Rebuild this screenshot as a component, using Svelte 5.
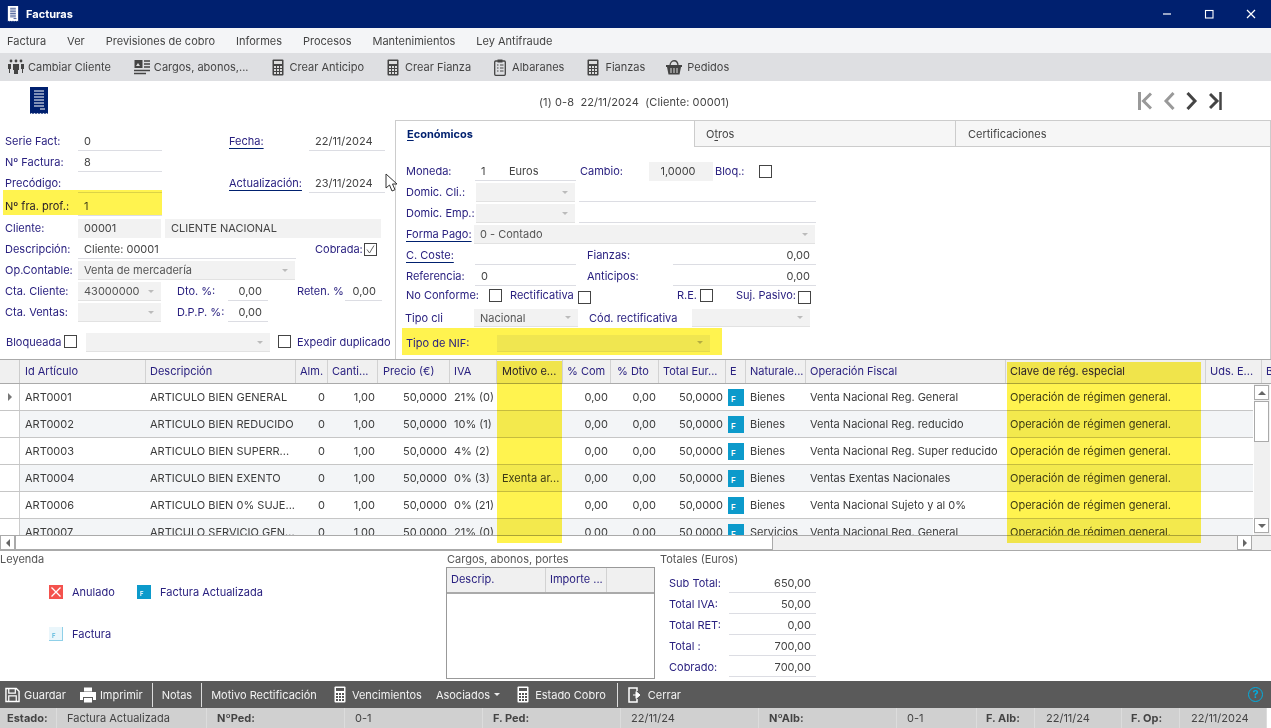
<script>
  const menu = ['Factura', 'Ver', 'Previsiones de cobro', 'Informes', 'Procesos', 'Mantenimientos', 'Ley Antifraude'];
  const cols = [
    ['Id Artículo', 'c1'], ['Descripción', 'c2'], ['Alm.', 'c3'], ['Canti...', 'c4'], ['Precio (€)', 'c5'], ['IVA', 'c6'],
    ['Motivo e...', 'c7'], ['% Com', 'c8'], ['% Dto', 'c9'], ['Total Eur...', 'c10'], ['E', 'c11'], ['Naturale...', 'c12'],
    ['Operación Fiscal', 'c13'], ['Clave de rég. especial', 'c14'], ['Uds. E...', 'c15'], ['B', 'c16']
  ];
  const rows = [
    ['ART0001', 'ARTICULO BIEN GENERAL', '21% (0)', '', 'Bienes', 'Venta Nacional Reg. General'],
    ['ART0002', 'ARTICULO BIEN REDUCIDO', '10% (1)', '', 'Bienes', 'Venta Nacional Reg. reducido'],
    ['ART0003', 'ARTICULO BIEN SUPERR...', '4% (2)', '', 'Bienes', 'Venta Nacional Reg. Super reducido'],
    ['ART0004', 'ARTICULO BIEN EXENTO', '0% (3)', 'Exenta ar...', 'Bienes', 'Ventas Exentas Nacionales'],
    ['ART0006', 'ARTICULO BIEN 0% SUJE...', '0% (21)', '', 'Bienes', 'Venta Nacional Sujeto y al 0%'],
    ['ART0007', 'ARTICULO SERVICIO GEN...', '21% (0)', '', 'Servicios', 'Venta Nacional Reg. General']
  ];
  const totals = [['Sub Total:', '650,00'], ['Total IVA:', '50,00'], ['Total RET:', '0,00'], ['Total :', '700,00'], ['Cobrado:', '700,00']];
  const status = [
    ['Estado:', 's1', true], ['Factura Actualizada', 's2', false], ['NºPed:', 's3', true], ['0-1', 's3', false],
    ['F. Ped:', 's3', true], ['22/11/24', 's3', false], ['NºAlb:', 's3', true], ['0-1', 's4', false],
    ['F. Alb:', 's5', true], ['22/11/24', 's6', false], ['F. Op:', 's5', true], ['22/11/2024', 's6', false]
  ];
</script>

{#snippet calc()}
  <svg class="ic12" viewBox="0 0 12 17"><rect x="0.5" y="0.5" width="11" height="16" rx="1" fill="#444"/><rect x="2" y="2" width="8" height="3" fill="#ddd"/><path d="M2 7h2v2H2zM5 7h2v2H5zM8 7h2v2H8zM2 10h2v2H2zM5 10h2v2H5zM8 10h2v2H8zM2 13h2v2H2zM5 13h2v2H5zM8 13h2v2H8z" fill="#ddd"/></svg>
{/snippet}
{#snippet calcW()}
  <svg class="ic12" viewBox="0 0 12 17"><rect x="0.5" y="0.5" width="11" height="16" rx="1" fill="#fff"/><rect x="2" y="2" width="8" height="3" fill="#555"/><path d="M2 7h2v2H2zM5 7h2v2H5zM8 7h2v2H8zM2 10h2v2H2zM5 10h2v2H5zM8 10h2v2H8zM2 13h2v2H2zM5 13h2v2H5zM8 13h2v2H8z" fill="#555"/></svg>
{/snippet}
{#snippet receipt(bg, fg, cls)}
  <svg class={cls} viewBox="0 0 18 28"><path d="M0 0h18v27l-1.5-1-1.5 1-1.5-1-1.5 1-1.5-1-1.5 1-1.5-1-1.5 1-1.5-1-1.5 1-1.5-1L0 27z" fill={bg}/><path d="M4 4h10M4 7h10M4 10h10M4 13h10M4 16h10M4 19h10M10 22h5" stroke={fg} stroke-width="1.2"/></svg>
{/snippet}
{#snippet sel(text, cls)}
  <div class="sel {cls}"><span>{text}</span><i class="caret"></i></div>
{/snippet}

<div class="app">
  <header class="title">
    {@render receipt('#fff', '#00206f', 'tico')}
    <b>Facturas</b>
    <div class="win">
      <svg viewBox="0 0 10 10"><path d="M1 5h8" stroke="#fff" stroke-width="1.2"/></svg>
      <svg viewBox="0 0 10 10"><rect x="1.5" y="1.5" width="7.5" height="7.5" fill="none" stroke="#fff" stroke-width="1.1"/></svg>
      <svg viewBox="0 0 10 10"><path d="M1 1l8 8M9 1l-8 8" stroke="#fff" stroke-width="1.2"/></svg>
    </div>
  </header>

  <nav class="menu">
    {#each menu as m}<span>{m}</span>{/each}
  </nav>

  <div class="tools">
    <div class="tool t0"><svg class="ic16" viewBox="0 0 16 16" fill="#444"><circle cx="3" cy="2" r="1.4"/><circle cx="8" cy="2" r="1.4"/><circle cx="13" cy="2" r="1.4"/><path d="M0 5h3v5H2v4H1v-4H0zM13 5h3v5h-1v4h-1v-4h-1zM5 5h6v6h-1v4H6v-4H5z"/></svg><span>Cambiar Cliente</span></div>
    <div class="tool"><svg class="ic16" viewBox="0 0 16 16"><rect x="0.5" y="1" width="8" height="8" fill="#444"/><path d="M2 7l2-3 2 3z" fill="#ddd"/><path d="M10 2h6M10 5h6M10 8h6M0 11.5h16M0 14.5h12" stroke="#444" stroke-width="1.5"/></svg><span>Cargos, abonos,...</span></div>
    <div class="tool t2">{@render calc()}<span>Crear Anticipo</span></div>
    <div class="tool t2">{@render calc()}<span>Crear Fianza</span></div>
    <div class="tool t2"><svg class="ic12" viewBox="0 0 12 17"><rect x="0.7" y="2" width="10.6" height="14.3" rx="1" fill="none" stroke="#444" stroke-width="1.3"/><rect x="3.5" y="0.5" width="5" height="3" fill="#444"/><path d="M3 6h1.5M6 6h3.5M3 9h1.5M6 9h3.5M3 12h1.5M6 12h3.5" stroke="#444"/></svg><span>Albaranes</span></div>
    <div class="tool t2">{@render calc()}<span>Fianzas</span></div>
    <div class="tool t3"><svg class="ic16" viewBox="0 0 16 16"><path d="M4 7c0-7 8-7 8 0" fill="none" stroke="#444" stroke-width="1.3"/><path d="M0 6h16v2h-1l-1.5 7.5h-11L1 8H0z" fill="#444"/><path d="M5 9v5M8 9v5M11 9v5" stroke="#ddd"/></svg><span>Pedidos</span></div>
  </div>

  <section class="top">
    <div class="hdr">
      <div class="hleft">{@render receipt('#00206f', '#fff', 'big')}</div>
      <div class="hmid">(1) 0-8&nbsp; 22/11/2024&nbsp; (Cliente: 00001)</div>
      <div class="navs">
        <svg class="n1" viewBox="0 0 14 18"><path d="M1.5 0v18" stroke="#999" stroke-width="3"/><path d="M13 1.500L5.500 9l7.500 7.500" fill="none" stroke="#999" stroke-width="3"/></svg>
        <svg class="n2" viewBox="0 0 12 18"><path d="M10.500 1L3 9l7.500 8" fill="none" stroke="#999" stroke-width="3"/></svg>
        <svg class="n2" viewBox="0 0 12 18"><path d="M1.500 1L9 9l-7.500 8" fill="none" stroke="#444" stroke-width="3"/></svg>
        <svg class="n1" viewBox="0 0 13 18"><path d="M1 2l7 7-7 7" fill="none" stroke="#444" stroke-width="3"/><path d="M11.500 0v18" stroke="#444" stroke-width="2.500"/></svg>
      </div>
    </div>
    <div class="panels">
      <div class="left">
        <div class="lr r1"><label>Serie Fact:</label><div class="f">0</div><label class="col"><u>Fecha:</u></label><div class="f">22/11/2024</div></div>
        <div class="lr r1"><label>Nº Factura:</label><div class="f">8</div></div>
        <div class="lr r1"><label>Precódigo:</label><div class="f"></div><label class="col"><u>Actualización:</u></label><div class="f">23/11/2024</div></div>
        <div class="lr r1 prof"><i class="band"></i><label>Nº fra. prof.:</label><div class="f">1</div></div>
        <div class="lr r5"><label>Cliente:</label><div class="f g">00001</div><div class="f g wide">CLIENTE NACIONAL</div></div>
        <div class="lr r6"><label>Descripción:</label><div class="f">Cliente: 00001</div><label class="cob">Cobrada:</label><svg class="cb" viewBox="0 0 13 13"><rect x="0.500" y="0.500" width="12" height="12" fill="#fff" stroke="#444"/><path d="M3 6.500l2.500 3.500L10 2.500" fill="none" stroke="#666"/></svg></div>
        <div class="lr r7"><label>Op.Contable:</label>{@render sel('Venta de mercadería', '')}</div>
        <div class="lr r8"><label>Cta. Cliente:</label>{@render sel('43000000', '')}<label class="d">Dto. %:</label><div class="f num">0,00</div><label class="rt">Reten. %</label><div class="f num last">0,00</div></div>
        <div class="lr r8"><label>Cta. Ventas:</label>{@render sel('', '')}<label class="d">D.P.P. %:</label><div class="f num">0,00</div></div>
        <div class="lr r10"><label>Bloqueada</label><i class="box"></i>{@render sel('', '')}<i class="box"></i><label>Expedir duplicado</label></div>
      </div>

      <div class="tabs">
        <div class="tabhead">
          <div class="tab on"><u>E</u>conómicos</div>
          <div class="tab o">O<u>t</u>ros</div>
          <div class="tab c">Certificaciones</div>
        </div>
        <div class="tabbody">
          <div class="tr a"><label>Moneda:</label><div class="f mon"><span>1</span><span>Euros</span></div><label class="cam">Cambio:</label><div class="f g">1,0000</div><label class="blq">Bloq.:</label><i class="box"></i></div>
          <div class="tr b"><label>Domic. Cli.:</label>{@render sel('', '')}<div class="f"></div></div>
          <div class="tr b"><label>Domic. Emp.:</label>{@render sel('', '')}<div class="f"></div></div>
          <div class="tr c2r"><label><u>Forma Pago:</u></label>{@render sel('0 - Contado', '')}</div>
          <div class="tr d2"><label><u>C. Coste:</u></label><div class="f"></div><label class="fz">Fianzas:</label><div class="f num2">0,00</div></div>
          <div class="tr d2"><label>Referencia:</label><div class="f">0</div><label class="fz">Anticipos:</label><div class="f num2">0,00</div></div>
          <div class="tr nc"><label>No Conforme:</label><i class="box"></i><label class="rc">Rectificativa</label><i class="box low"></i><label class="re">R.E.</label><i class="box"></i><label class="sj">Suj. Pasivo:</label><i class="box low"></i></div>
          <div class="tr tc"><label>Tipo cli</label>{@render sel('Nacional', '')}<label class="cr">Cód. rectificativa</label>{@render sel('', '')}</div>
          <div class="nif"><label>Tipo de NIF:</label>{@render sel('', 'ysel')}</div>
        </div>
      </div>
    </div>
    <svg class="cursor" viewBox="0 0 14 19"><path d="M1 1v14l3.500-3 2.500 6 3-1.300-2.500-5.700H12z" fill="#fff" stroke="#333"/></svg>
  </section>

  <section class="table">
    <div class="thead">
      <div class="rh"></div>
      {#each cols as c}<div class="th {c[1]}">{c[0]}</div>{/each}
    </div>
    <div class="tmid">
      <div class="tbody">
        {#each rows as r, i}
          <div class="row" class:alt={i % 2 === 1}>
            <div class="rh">{#if i === 0}<i class="tri"></i>{/if}</div>
            <div class="td c1">{r[0]}</div>
            <div class="td c2">{r[1]}</div>
            <div class="td c3 n">0</div>
            <div class="td c4 n">1,00</div>
            <div class="td c5 n">50,0000</div>
            <div class="td c6">{r[2]}</div>
            <div class="td c7">{r[3]}</div>
            <div class="td c8 n">0,00</div>
            <div class="td c9 n">0,00</div>
            <div class="td c10 n">50,0000</div>
            <div class="td c11 ec"><span class="fic">F</span></div>
            <div class="td c12">{r[4]}</div>
            <div class="td c13">{r[5]}</div>
            <div class="td c14">Operación de régimen general.</div>
            <div class="td c15"></div>
          </div>
        {/each}
      </div>
      <div class="vbar">
        <div class="sb"><i class="up"></i></div>
        <div class="thumb"></div>
        <div class="sp"></div>
        <div class="sb"><i class="down"></i></div>
      </div>
    </div>
    <div class="hbar">
      <div class="sb h"><i class="lf"></i></div>
      <div class="hthumb"></div>
      <div class="sp"></div>
      <div class="sb h"><i class="rg"></i></div>
    </div>
    <i class="hl hl1"></i>
    <i class="hl hl2"></i>
  </section>

  <section class="bottom">
    <div class="legend">
      <div class="cap">Leyenda</div>
      <div class="lgrid">
        <div class="li"><svg class="lic" viewBox="0 0 14 14"><rect width="14" height="14" fill="#f4524d"/><path d="M2.500 2.500l9 9M11.500 2.500l-9 9" stroke="#fff" stroke-width="1.300"/></svg><span>Anulado</span></div>
        <div class="li l2"><span class="fic lg">F</span><span>Factura Actualizada</span></div>
        <div class="li"><span class="fic lg pale">F</span><span>Factura</span></div>
      </div>
    </div>
    <div class="cargos">
      <div class="cap">Cargos, abonos, portes</div>
      <div class="cbox">
        <div class="chead"><div>Descrip.</div><div>Importe ...</div><div></div></div>
      </div>
    </div>
    <div class="totals">
      <div class="cap">Totales (Euros)</div>
      <div class="tlist">
        {#each totals as t}
          <div class="trow"><label>{t[0]}</label><div class="f num">{t[1]}</div></div>
        {/each}
      </div>
    </div>
  </section>

  <div class="actions">
    <div class="act"><svg class="ic15" viewBox="0 0 16 16"><path d="M1 1h11l3 3v11H1z" fill="none" stroke="#fff" stroke-width="1.500"/><path d="M4 1v5h7V1M4 15v-6h8v6" fill="none" stroke="#fff" stroke-width="1.300"/></svg><span>Guardar</span></div>
    <div class="act"><svg class="ic16" viewBox="0 0 16 16"><rect x="4" y="0.500" width="8" height="4" fill="#fff"/><path d="M0 5h16v8h-3v-3H3v3H0z" fill="#fff"/><rect x="4" y="11" width="8" height="4.500" fill="#fff"/></svg><span>Imprimir</span></div>
    <i class="sepv"></i>
    <div class="act"><span>Notas</span></div>
    <i class="sepv"></i>
    <div class="act"><span>Motivo Rectificación</span></div>
    <div class="act a6">{@render calcW()}<span>Vencimientos</span></div>
    <div class="act"><span>Asociados</span><i class="wcar"></i></div>
    <div class="act a6">{@render calcW()}<span>Estado Cobro</span></div>
    <i class="sepv s-last"></i>
    <div class="act cer"><svg class="ic16" viewBox="0 0 16 16"><path d="M9 4V1H1v14h8v-3" fill="none" stroke="#fff" stroke-width="1.500"/><path d="M5 8h6M8 4.500L12 8l-4 3.500z" fill="#fff" stroke="#fff"/></svg><span>Cerrar</span></div>
    <div class="help">?</div>
  </div>

  <footer class="status">
    {#each status as s}<div class={s[1]} class:k={s[2]}>{s[0]}</div>{/each}
  </footer>
</div>

<style>
  :global(body) { margin: 0; background: #fff; }
  .app { width: 1271px; height: 728px; overflow: hidden; display: flex; flex-direction: column; font: 11px Inter, "Liberation Sans", sans-serif; color: #444; background: #fff; }
  label { color: #2a2180; white-space: nowrap; }
  label u { text-decoration-color: #00206f; text-underline-offset: 3px; }
  i { display: block; }

  .title { height: 28px; flex: none; background: #00206f; display: flex; align-items: center; color: #fff; padding-left: 7px; }
  .title b { margin-left: 7px; font-size: 11px; }
  .tico { width: 12px; height: 16px; }
  .win { margin-left: auto; display: flex; gap: 32px; padding-right: 15px; }
  .win svg { width: 10px; height: 10px; }

  .menu { height: 25px; flex: none; background: #f4f5f7; display: flex; align-items: center; gap: 21px; padding-left: 7px; }
  .tools { height: 28px; flex: none; background: #dedfe2; display: flex; align-items: center; padding-left: 8px; gap: 21px; }
  .tool { display: flex; align-items: center; gap: 4px; }
  .t0 { margin-right: 2px; }
  .t2 { gap: 6px; margin-left: 2px; }
  .t3 { gap: 5px; }
  .ic16 { width: 16px; height: 16px; flex: none; }
  .ic15 { width: 15px; height: 16px; flex: none; }
  .ic12 { width: 12px; height: 17px; flex: none; }

  .top { height: 278px; flex: none; position: relative; }
  .hdr { height: 39px; display: flex; }
  .hleft { width: 539px; padding: 6px 0 0 30px; box-sizing: border-box; }
  .big { width: 18px; height: 28px; display: block; }
  .hmid { padding-top: 14px; letter-spacing: 0.09px; }
  .navs { margin-left: auto; padding: 11px 49px 0 0; display: flex; gap: 11px; }
  .navs svg { height: 18px; }
  .n1 { width: 14px; }
  .n2 { width: 12px; }
  .navs .n1:last-child { width: 13px; }
  .panels { display: flex; }
  .cursor { position: absolute; left: 385px; top: 92px; width: 14px; height: 19px; }

  .left { width: 395px; flex: none; padding: 11px 0 0 5px; box-sizing: border-box; }
  .lr { height: 20px; margin-bottom: 1px; display: grid; align-items: end; position: relative; }
  .lr > label { align-self: center; }
  .f { height: 19px; line-height: 18px; box-sizing: border-box; border-bottom: 1px solid #dcdde3; padding-left: 6px; overflow: hidden; white-space: nowrap; }
  .g { background: #f2f2f2; border-bottom-color: #f2f2f2; }
  .num, .num2 { text-align: right; padding: 0 6px 0 0; }
  .r1 { grid-template-columns: 73px 84px 67px 80px 76px; }
  .col { grid-column: 3 / span 2; padding-left: 67px; }
  .prof { margin-top: 3px; margin-bottom: 2px; }
  .band { position: absolute; left: -2px; top: -6px; width: 159px; height: 25px; background: #fff34f; mix-blend-mode: multiply; }
  .r5 { grid-template-columns: 73px 83px 4px 216px; }
  .r5 .wide { grid-column: 4; }
  .r6 { grid-template-columns: 73px 218px 19px 49px 13px; }
  .cob { grid-column: 4; }
  .cb { width: 13px; height: 13px; grid-column: 5; align-self: center; }
  .r7 { grid-template-columns: 73px 217px; }
  .r8 { grid-template-columns: 73px 83px 16px 51px 40px 29px 48px 37px; }
  .d { grid-column: 4; }
  .rt { grid-column: 6 / span 2; padding-left: 29px; }
  .last { grid-column: 8; }
  .r10 { margin-top: 9px; margin-left: 1px; grid-template-columns: 58px 13px 9px 184px 8px 13px 6px auto; align-items: center; }
  .r10 > :nth-child(2) { grid-column: 2; }
  .r10 > :nth-child(3) { grid-column: 4; }
  .r10 > :nth-child(4) { grid-column: 6; }
  .r10 > :nth-child(5) { grid-column: 8; }
  .r10 .sel { margin-top: 2px; }

  .box { width: 13px; height: 13px; border: 1px solid #444; box-sizing: border-box; background: #fff; flex: none; }
  .low { transform: translateY(2px); }
  .sel { height: 19px; box-sizing: border-box; background: #f2f2f2; border-bottom: 1px solid #e2e2e2; display: flex; align-items: center; justify-content: space-between; padding: 0 7px 0 6px; color: #555; }
  .caret { width: 0; height: 0; border: 3px solid transparent; border-top: 3px solid #bbb; margin-top: 3px; }

  .tabs { flex: 1; min-width: 0; }
  .tabhead { display: flex; height: 27px; }
  .tab { box-sizing: border-box; line-height: 26px; padding-left: 12px; background: #f6f6f6; border-top: 1px solid #ccc; border-bottom: 1px solid #ccc; border-right: 1px solid #ccc; }
  .tab u { text-underline-offset: 2px; }
  .tab.on { width: 300px; background: #fff; font-weight: 700; color: #00206f; border-bottom: 0; border-left: 1px solid #ccc; padding-left: 11px; }
  .tab.o { width: 261px; padding-left: 11px; }
  .tab.c { width: 315px; }
  .tabbody { height: 212px; box-sizing: border-box; border-left: 1px solid #ccc; border-right: 1px solid #ccc; padding: 15px 0 0 10px; }
  .tr { height: 19px; margin-bottom: 2px; display: flex; align-items: center; }
  .tr label { flex: none; align-self: flex-start; line-height: 18px; }
  .tr .f { flex: none; }
  .tr .sel { flex: none; }
  .a label:first-child { width: 69px; }
  .mon { width: 101px; display: flex; }
  .mon span:first-child { width: 28px; }
  .cam { width: 69px; margin-left: 4px; }
  .a .g { width: 64px; text-align: center; padding: 0 6px 0 0; }
  .blq { width: 44px; margin-left: 2px; }
  .b label { width: 70px; }
  .b .sel { width: 99px; }
  .b .f { width: 237px; margin-left: 4px; }
  .c2r label { width: 68px; }
  .c2r .sel { width: 341px; }
  .d2 label:first-child { width: 69px; }
  .d2 .f:nth-child(2) { width: 101px; }
  .fz { width: 86px; margin-left: 11px; }
  .num2 { width: 143px; }
  .nc { margin-top: -2px; margin-bottom: 4px; }
  .nc label:first-child { width: 83px; }
  .rc { width: 68px; margin-left: 8px; }
  .re { width: 23px; margin-left: 86px; }
  .sj { width: 62px; margin-left: 23px; }
  .tc { margin: 1px 0 2px -1px; height: 18px; }
  .tc label:first-child { width: 69px; }
  .tc .sel { height: 18px; }
  .tc .sel:nth-child(2) { width: 104px; }
  .cr { width: 103px; margin-left: 11px; }
  .tc .sel:last-child { width: 118px; }
  .nif { width: 320px; height: 27px; margin-left: -4px; margin-top: -1px; background: #fff34f; display: flex; align-items: center; box-sizing: border-box; padding: 3px 0 0 4px; }
  .nif label { width: 91px; }
  .ysel { width: 213px; height: 17px; background: #f0e650; border-bottom-color: #e4da4c; padding-right: 7px; }
  .ysel .caret { border-top-color: #b5ad40; }

  .table { height: 192px; flex: none; position: relative; box-sizing: border-box; border-top: 1px solid #aaa; border-bottom: 1px solid #aaa; display: flex; flex-direction: column; }
  .thead { height: 23px; flex: none; display: flex; background: #f0f0f0; border-bottom: 1px solid #aaa; box-sizing: content-box; overflow: hidden; }
  .th { box-sizing: border-box; line-height: 23px; padding-left: 4px; color: #2a2180; border-right: 1px solid #d2d2d2; flex: none; white-space: nowrap; overflow: hidden; }
  .th.c5 { padding-left: 5px; }
  .th.c9 { padding-left: 6px; }
  .rh { width: 20px; flex: none; box-sizing: border-box; border-right: 1px solid #ccc; display: flex; align-items: center; justify-content: center; }
  .tri { width: 0; height: 0; border: 4px solid transparent; border-left: 4px solid #777; border-right: 0; }
  .tmid { height: 151px; flex: none; display: flex; overflow: hidden; }
  .tbody { width: 1253px; flex: none; overflow: hidden; }
  .row { height: 27px; box-sizing: border-box; border-bottom: 1px solid #c6c6c6; display: flex; background: #fff; width: 1270px; }
  .row.alt { background: #f3f5f7; }
  .row .rh { background: #fff; }
  .td { box-sizing: border-box; line-height: 26px; padding-left: 4px; flex: none; white-space: nowrap; overflow: hidden; color: #3c3c3c; }
  .n { text-align: right; padding: 0 3px 0 0; }
  .c1 { width: 126px; padding-left: 5px; }
  .c2 { width: 150px; padding-left: 4px; }
  .c3 { width: 32px; }
  .c4 { width: 50px; }
  .c5 { width: 72px; }
  .c6 { width: 47px; }
  .c7 { width: 66px; padding-left: 5px; }
  .c8 { width: 48px; }
  .c9 { width: 48px; }
  .c10 { width: 67px; }
  .c11 { width: 20px; }
  .c12 { width: 60px; }
  .c13 { width: 200px; }
  .c14 { width: 200px; }
  .c15 { width: 56px; }
  .c16 { width: 20px; }
  .ec { padding: 0 0 0 2px; display: flex; align-items: center; }
  .fic { width: 16px; height: 17px; flex: none; background: #0c9acb; color: #fff; font-size: 8px; font-weight: 600; line-height: 20px; padding-left: 3px; box-sizing: border-box; display: block; }
  .lg { width: 14px; height: 14px; line-height: 17px; font-size: 6px; }
  .pale { background: #eaf6fb; color: #59b8dc; border-right: 1px solid #8fd0e8; border-bottom: 1px solid #8fd0e8; }

  .vbar { width: 16px; margin-left: 1px; padding-top: 1px; display: flex; flex-direction: column; background: #f0f0f0; }
  .sb { width: 15px; height: 15px; flex: none; border: 1px solid #aaa; box-sizing: border-box; background: #fff; display: flex; align-items: center; justify-content: center; }
  .thumb { width: 15px; height: 41px; margin-top: 1px; box-sizing: border-box; border: 1px solid #aaa; background: #fff; }
  .sp { flex: 1; }
  .vbar .sb:last-child { margin-bottom: 2px; }
  .up { border: 4px solid transparent; border-bottom: 4px solid #666; border-top: 0; }
  .down { border: 4px solid transparent; border-top: 4px solid #666; border-bottom: 0; }
  .lf { border: 4px solid transparent; border-right: 4px solid #666; border-left: 0; }
  .rg { border: 4px solid transparent; border-left: 4px solid #666; border-right: 0; }
  .hbar { flex: 1; display: flex; background: #f0f0f0; border-top: 1px solid #aaa; padding-right: 19px; }
  .hthumb { width: 758px; box-sizing: border-box; border: 1px solid #aaa; background: #fff; border-top: 0; }
  .sb.h { height: 14px; border-top: 0; }
  .hl { position: absolute; background: #fff34f; mix-blend-mode: multiply; top: 1px; height: 182px; }
  .hl1 { left: 497px; width: 65px; }
  .hl2 { left: 1007px; width: 194px; top: 2px; height: 181px; }

  .bottom { height: 130px; flex: none; display: flex; }
  .cap { line-height: 14px; padding-top: 1px; color: #555; }
  .legend { width: 446px; flex: none; }
  .lgrid { display: grid; grid-template-columns: 88px auto; grid-auto-rows: 42px; padding: 19px 0 0 49px; align-items: start; }
  .li { display: flex; align-items: center; gap: 9px; color: #2a2180; }
  .lic { width: 14px; height: 14px; flex: none; }
  .cargos { width: 214px; flex: none; }
  .cargos .cap { padding-left: 1px; }
  .cbox { width: 209px; height: 112px; margin-top: 1px; box-sizing: border-box; border: 1px solid #999; }
  .chead { height: 24px; display: grid; grid-template-columns: 99px 61px auto; background: #f0f0f0; border-bottom: 2px solid #aaa; box-sizing: content-box; color: #2a2180; line-height: 23px; }
  .chead div { padding-left: 4px; border-right: 1px solid #d2d2d2; }
  .chead div:last-child { border: 0; }
  .tlist { padding: 6px 0 0 9px; }
  .trow { height: 21px; display: grid; grid-template-columns: 60px 87px; align-items: end; }
  .trow label { align-self: center; }
  .trow .f { height: 20px; line-height: 20px; padding-right: 5px; }

  .actions { height: 27px; flex: none; background: #5a5a5a; color: #fff; display: flex; align-items: center; padding-left: 5px; gap: 14px; }
  .act { display: flex; align-items: center; gap: 4px; color: #f2f2f2; }
  .a6 { gap: 6px; margin-left: 3px; }
  .cer { margin-left: 1px; }
  .sepv { width: 1px; height: 24px; background: #ddd; margin: 0 -5px 0 -5px; }
  .s-last { margin-left: -3px; }
  .wcar { border: 3px solid transparent; border-top: 3px solid #eee; margin-top: 3px; }
  .help { margin-left: auto; margin-right: 8px; width: 15px; height: 15px; box-sizing: border-box; border: 1.500px solid #00aee0; border-radius: 50%; color: #00aee0; text-align: center; line-height: 12px; font-size: 11px; font-weight: 700; }

  .status { height: 20px; flex: none; background: #d0d0d0; display: flex; width: 1266px; line-height: 20px; }
  .status div { box-sizing: border-box; padding-left: 10px; border-right: 1px solid #dcdcdc; flex: none; white-space: nowrap; overflow: hidden; color: #444; }
  .status .k { font-weight: 700; }
  .s1 { width: 57px; padding-left: 7px !important; }
  .s2 { width: 150px; }
  .s3 { width: 138px; }
  .s4 { width: 80px; }
  .s5 { width: 58px; padding-left: 9px !important; }
  .s6 { width: 87px; padding-left: 11px !important; }
</style>
